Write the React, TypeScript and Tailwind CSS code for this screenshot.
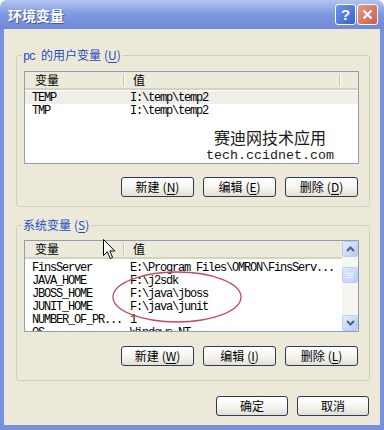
import React from "react";

function Btn({ children, className = "" }: { children: React.ReactNode; className?: string }) {
  return (
    <div
      className={`h-[20px] flex items-center justify-center rounded-[3px] border border-[#2c3b57] bg-linear-to-b from-white via-[#f6f5f1] to-[#e2e0d5] text-[12px] leading-none text-black ${className}`}
    >
      {children}
    </div>
  );
}

function Mn({ c }: { c: string }) {
  return (
    <span className="ml-[3px]">
      (<span className="underline underline-offset-2">{c}</span>)
    </span>
  );
}

function Sep() {
  return <div className="h-[12px] w-[2px] self-center border-l border-[#c5c2b0] border-r border-r-white" />;
}

function Row({ a, b, sel = false }: { a: string; b: string; sel?: boolean }) {
  return (
    <div
      className={`flex h-[13px] items-center whitespace-nowrap font-['Liberation_Mono',monospace] text-[12px] leading-none tracking-[-1.2px] text-black ${
        sel ? "bg-[#efeee8]" : ""
      }`}
    >
      <div className="w-[100px] pl-[7px] overflow-hidden">{a}</div>
      <div className="pl-[5px]">{b}</div>
    </div>
  );
}

function ScrollBtn({ up }: { up: boolean }) {
  return (
    <div className="h-[16px] w-[16px] rounded-[2px] border border-[#bccdf5] bg-linear-to-br from-[#e6edfe] to-[#b6c9f5] flex items-center justify-center">
      <svg width="9" height="6" viewBox="0 0 9 6">
        {up ? (
          <path d="M1 5 L4.5 1.5 L8 5" fill="none" stroke="#4d6185" strokeWidth="2" />
        ) : (
          <path d="M1 1 L4.5 4.5 L8 1" fill="none" stroke="#4d6185" strokeWidth="2" />
        )}
      </svg>
    </div>
  );
}

function TitleBar() {
  return (
    <div className="h-[29px] shrink-0 rounded-t-[7px] bg-linear-to-b from-[#b3c4f0] via-[#7f98e0] to-[#7089d8] flex items-center pl-[8px] pr-[6px]">
      <div className="flex-1 text-[14px] font-bold leading-none text-white [text-shadow:1px_1px_0_#44599c]">
        环境变量
      </div>
      <div className="flex gap-[1px] -mt-[1px]">
        <div className="h-[21px] w-[21px] rounded-[3px] border border-white bg-linear-to-br from-[#6f94ec] to-[#3a62cf] flex items-center justify-center text-[15px] font-bold leading-none text-white font-['Liberation_Sans',sans-serif]">
          ?
        </div>
        <div className="h-[21px] w-[21px] rounded-[3px] border border-white bg-linear-to-br from-[#e59a8a] to-[#cc5f4b] flex items-center justify-center">
          <svg width="11" height="11" viewBox="0 0 11 11">
            <path d="M1.5 1.5 L9.5 9.5 M9.5 1.5 L1.5 9.5" stroke="white" strokeWidth="2.2" />
          </svg>
        </div>
      </div>
    </div>
  );
}

export default function App() {
  return (
    <div className="relative w-[384px] h-[430px] overflow-hidden bg-white flex flex-col font-['Noto_Sans_CJK_SC',sans-serif]">
      <TitleBar />
      <div className="flex-1 flex flex-col bg-[#ece9d8] border-l-[4px] border-r-[4px] border-b-[5px] border-[#7690db]">
        {/* Group 1 */}
        <div className="relative mt-[26px] ml-[12px] mr-[10px] rounded-[3px] border border-[#d0d0bf] pt-[15px] pb-[9px]">
          <div className="absolute left-[5px] -top-[8px] h-[14px] bg-[#ece9d8] px-[1px] text-[12px] leading-[14px] text-[#1f4cc0] whitespace-nowrap">
            <span className="font-['Liberation_Mono',monospace] text-[12px] tracking-[-1.2px]">pc </span>的用户变量
            <Mn c="U" />
          </div>
          <div className="relative ml-[7px] mr-[10px] h-[93px] border border-[#8e9fb3] bg-white overflow-hidden">
            <div className="flex h-[18px] bg-[#ebeadb] border-b-[2px] border-[#d6d2c2] text-[12px] leading-none text-black">
              <div className="w-[98px] flex items-center pl-[10px]">变量</div>
              <Sep />
              <div className="w-[214px] flex items-center pl-[8px]">值</div>
              <Sep />
              <div className="flex-1" />
            </div>
            <div className="pt-[1px]">
              <Row a="TEMP" b="I:\temp\temp2" sel />
              <Row a="TMP" b="I:\temp\temp2" />
            </div>
            <div className="absolute left-[181px] top-[57px] w-[128px] flex flex-col items-center text-[#1a1a1a]">
              <div className="text-[16px] leading-[16px] whitespace-nowrap">赛迪网技术应用</div>
              <div className="mt-[4px] font-['Liberation_Mono',monospace] text-[13.33px] leading-[14px] whitespace-nowrap">
                tech.ccidnet.com
              </div>
            </div>
          </div>
          <div className="mt-[13px] mr-[11px] flex justify-end gap-[9px]">
            <Btn className="w-[73px]">新建<Mn c="N" /></Btn>
            <Btn className="w-[73px]">编辑<Mn c="E" /></Btn>
            <Btn className="w-[73px]">删除<Mn c="D" /></Btn>
          </div>
        </div>

        {/* Group 2 */}
        <div className="relative mt-[18px] ml-[12px] mr-[10px] rounded-[3px] border border-[#d0d0bf] pt-[14px] pb-[14px]">
          <div className="absolute left-[5px] -top-[8px] h-[14px] bg-[#ece9d8] px-[1px] text-[12px] leading-[14px] text-[#1f4cc0] whitespace-nowrap">
            系统变量
            <Mn c="S" />
          </div>
          <div className="ml-[7px] mr-[10px] h-[92px] border border-[#8e9fb3] bg-white overflow-hidden flex">
            <div className="flex-1 flex flex-col overflow-hidden">
              <div className="flex h-[18px] shrink-0 bg-[#ebeadb] border-b-[2px] border-[#d6d2c2] text-[12px] leading-none text-black">
                <div className="w-[98px] flex items-center pl-[10px]">变量</div>
                <Sep />
                <div className="flex-1 flex items-center pl-[8px]">值</div>
              </div>
              <div className="pt-[2px]">
                <Row a="FinsServer" b="E:\Program Files\OMRON\FinsServ..." />
                <Row a="JAVA_HOME" b="F:\j2sdk" />
                <Row a="JBOSS_HOME" b="F:\java\jboss" />
                <Row a="JUNIT_HOME" b="F:\java\junit" />
                <Row a="NUMBER_OF_PR..." b="1" />
                <Row a="OS" b="Windows_NT" />
              </div>
            </div>
            <div className="w-[16px] flex flex-col bg-[#f6f5f0]">
              <ScrollBtn up />
              <div className="h-[10px]" />
              <div className="h-[16px] w-[16px] rounded-[2px] border border-[#bccdf5] bg-linear-to-br from-[#dfe8fe] to-[#bccdf6] flex flex-col items-center justify-center gap-[1px]">
                <div className="h-[1px] w-[6px] bg-[#eef3ff]" />
                <div className="h-[1px] w-[6px] bg-[#eef3ff]" />
                <div className="h-[1px] w-[6px] bg-[#eef3ff]" />
              </div>
              <div className="flex-1" />
              <ScrollBtn up={false} />
            </div>
          </div>
          <div className="mt-[14px] mr-[11px] flex justify-end gap-[9px]">
            <Btn className="w-[73px]">新建<Mn c="W" /></Btn>
            <Btn className="w-[73px]">编辑<Mn c="I" /></Btn>
            <Btn className="w-[73px]">删除<Mn c="L" /></Btn>
          </div>
        </div>

        {/* OK / Cancel */}
        <div className="mt-[15px] mr-[11px] flex justify-end gap-[9px]">
          <Btn className="w-[72px]">确定</Btn>
          <Btn className="w-[72px]">取消</Btn>
        </div>
      </div>

      {/* annotation ellipse */}
      <svg className="absolute left-[110px] top-[269px]" width="134" height="56" viewBox="0 0 134 56">
        <ellipse cx="67" cy="28" rx="64" ry="25" fill="none" stroke="#c24a5a" strokeWidth="1.3" />
      </svg>

      {/* mouse cursor */}
      <svg className="absolute left-[103px] top-[239px]" width="13" height="21" viewBox="0 0 13 21">
        <path
          d="M0.5 0.5 L0.5 16.5 L4.3 12.8 L7.2 19.5 L9.6 18.5 L6.8 12 L11.8 12 Z"
          fill="white"
          stroke="black"
          strokeWidth="1"
          strokeLinejoin="miter"
        />
      </svg>
    </div>
  );
}
